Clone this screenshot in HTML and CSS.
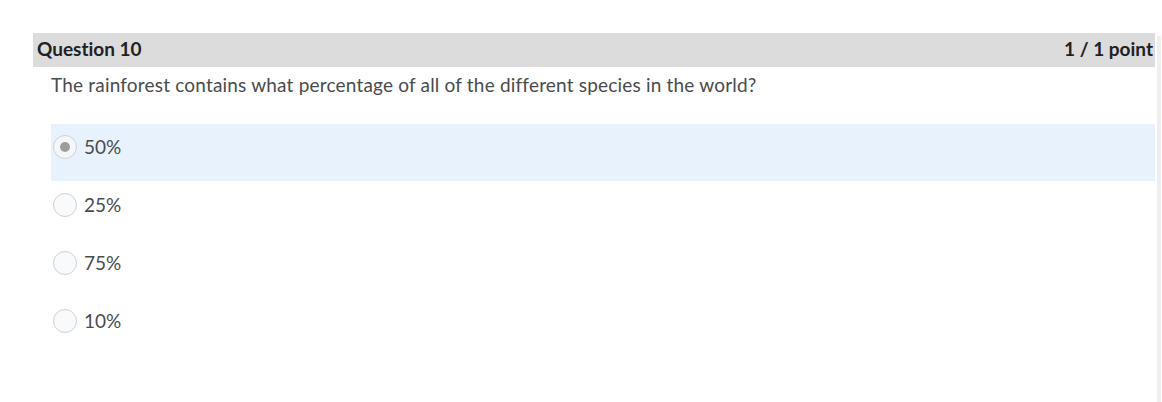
FILE: index.html
```html
<!DOCTYPE html>
<html>
<head>
<meta charset="utf-8">
<link rel="stylesheet" href="styles.css">
</head>
<body>
<div class="page">
  <div class="main">
    <div class="q-header">
      <span class="q-title">Question 10</span>
      <span class="q-score">1 / 1 point</span>
    </div>
    <div class="q-body">
      <p class="q-text">The rainforest contains what percentage of all of the different species in the world?</p>
      <ul class="options">
        <li class="option selected"><span class="radio checked"></span><span class="opt-label">50%</span></li>
        <li class="option"><span class="radio"></span><span class="opt-label">25%</span></li>
        <li class="option"><span class="radio"></span><span class="opt-label">75%</span></li>
        <li class="option"><span class="radio"></span><span class="opt-label">10%</span></li>
      </ul>
    </div>
  </div>
  <div class="side-rule"></div>
</div>
</body>
</html>
```
FILE: styles.css
```css
html, body {
  margin: 0;
  padding: 0;
  background: #ffffff;
}
body {
  font-family: Lato, "Open Sans", "Liberation Sans", sans-serif;
  font-variant-ligatures: none;
  color: #494c4e;
  width: 1162px;
  height: 402px;
  overflow: hidden;
}
.page {
  display: flex;
  padding-top: 33px;
  padding-left: 33px;
  height: 369px;
}
.main {
  width: 1122px;
  margin-right: 2px;
}
.side-rule {
  width: 4px;
  background: #efefef;
  margin-top: 3px;
}
.q-header {
  display: flex;
  justify-content: space-between;
  align-items: center;
  height: 34px;
  background: #dcdcdc;
  padding: 0 2px 2px 4px;
  box-sizing: border-box;
  color: #202122;
  font-weight: 700;
  font-size: 19px;
  line-height: 22px;
}
.q-body {
  padding-left: 18px;
}
.q-text {
  margin: 0;
  padding-top: 7px;
  height: 57px;
  box-sizing: border-box;
  font-size: 19px;
  line-height: 22px;
  letter-spacing: 0.19px;
  color: #494c4e;
}
.options {
  list-style: none;
  margin: 0;
  padding: 0;
}
.option {
  display: flex;
  align-items: flex-start;
  height: 58px;
  box-sizing: border-box;
  padding-top: 11px;
  padding-left: 2px;
  font-size: 19px;
  line-height: 24px;
}
.option.selected {
  background: #e8f2fc;
  height: 57px;
  margin-bottom: 1px;
}
.radio {
  width: 22px;
  height: 22px;
  border: 1px solid #cfd1d2;
  border-radius: 50%;
  background: #f9fafb;
  position: relative;
  box-sizing: content-box;
  flex: none;
}
.radio.checked {
  background: #f4f6f8;
}
.radio.checked::after {
  content: "";
  position: absolute;
  left: 6px;
  top: 6px;
  width: 10px;
  height: 10px;
  border-radius: 50%;
  background: #9a9c9e;
}
.opt-label {
  margin-left: 7px;
  color: #494c4e;
}
```
